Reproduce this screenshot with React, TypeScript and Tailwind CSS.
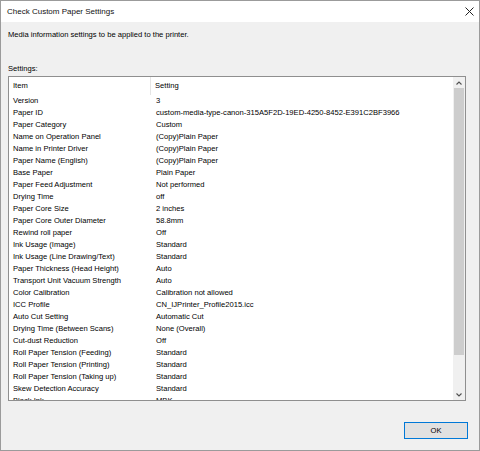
import React from "react";

const rows: [string, string][] = [
  ["Version", "3"],
  ["Paper ID", "custom-media-type-canon-315A5F2D-19ED-4250-8452-E391C2BF3966"],
  ["Paper Category", "Custom"],
  ["Name on Operation Panel", "(Copy)Plain Paper"],
  ["Name in Printer Driver", "(Copy)Plain Paper"],
  ["Paper Name (English)", "(Copy)Plain Paper"],
  ["Base Paper", "Plain Paper"],
  ["Paper Feed Adjustment", "Not performed"],
  ["Drying Time", "off"],
  ["Paper Core Size", "2 inches"],
  ["Paper Core Outer Diameter", "58.8mm"],
  ["Rewind roll paper", "Off"],
  ["Ink Usage (Image)", "Standard"],
  ["Ink Usage (Line Drawing/Text)", "Standard"],
  ["Paper Thickness (Head Height)", "Auto"],
  ["Transport Unit Vacuum Strength", "Auto"],
  ["Color Calibration", "Calibration not allowed"],
  ["ICC Profile", "CN_IJPrinter_Profile2015.icc"],
  ["Auto Cut Setting", "Automatic Cut"],
  ["Drying Time (Between Scans)", "None (Overall)"],
  ["Cut-dust Reduction", "Off"],
  ["Roll Paper Tension (Feeding)", "Standard"],
  ["Roll Paper Tension (Printing)", "Standard"],
  ["Roll Paper Tension (Taking up)", "Standard"],
  ["Skew Detection Accuracy", "Standard"],
  ["Black Ink", "MBK"],
];

export default function App() {
  return (
    <div
      className="w-[480px] h-[451px] border border-[#9b9b9b] flex flex-col text-black overflow-hidden"
      style={{ fontFamily: '"Liberation Sans", Arial, sans-serif' }}
    >
      <div className="h-[21px] bg-white flex items-center justify-between pl-[6px] pr-[6px] shrink-0">
        <span className="text-[8px] leading-none text-[#111]">Check Custom Paper Settings</span>
        <svg width="9" height="9" viewBox="0 0 9 9" className="mr-[-1px]">
          <path d="M0.5 0.5L8.5 8.5M8.5 0.5L0.5 8.5" stroke="#222" strokeWidth="1" />
        </svg>
      </div>
      <div className="flex-1 bg-[#f0f0f0] flex flex-col pl-[7px]">
        <div className="text-[7.6px] leading-[12px] mt-[7px]">
          Media information settings to be applied to the printer.
        </div>
        <div className="text-[7.6px] leading-[12px] mt-[22px]">Settings:</div>
        <div className="mt-[1px] w-[458px] h-[325px] border border-[#8f8f8f] bg-white flex overflow-hidden">
          <div className="flex-1 flex flex-col overflow-hidden text-[7.6px]">
            <div className="h-[18px] flex shrink-0 items-center">
              <div className="w-[142px] h-full flex items-center pl-[4px] border-r border-[#e5e5e5]">Item</div>
              <div className="pl-[4px]">Setting</div>
            </div>
            {rows.map(([k, v]) => (
              <div key={k} className="h-[12px] shrink-0 flex items-center leading-[12px] whitespace-nowrap">
                <div className="w-[142px] pl-[4px]">{k}</div>
                <div className="pl-[5px]">{v}</div>
              </div>
            ))}
          </div>
          <div className="w-[12px] bg-[#f0f0f0] flex flex-col items-center shrink-0">
            <div className="h-[11px] flex items-center justify-center shrink-0">
              <svg width="6" height="4" viewBox="0 0 6 4">
                <path d="M0.5 3.5L3 1L5.5 3.5" stroke="#505050" strokeWidth="1.1" fill="none" />
              </svg>
            </div>
            <div className="w-[10px] h-[267px] bg-[#cdcdcd] shrink-0" />
            <div className="flex-1" />
            <div className="h-[11px] flex items-center justify-center shrink-0">
              <svg width="6" height="4" viewBox="0 0 6 4">
                <path d="M0.5 0.5L3 3L5.5 0.5" stroke="#505050" strokeWidth="1.1" fill="none" />
              </svg>
            </div>
          </div>
        </div>
        <div className="flex justify-end pr-[11px] mt-[21px]">
          <button className="w-[64px] h-[17px] border border-[#0078d7] bg-[#e1e1e1] text-[7.6px] leading-none flex items-center justify-center">
            OK
          </button>
        </div>
      </div>
    </div>
  );
}
